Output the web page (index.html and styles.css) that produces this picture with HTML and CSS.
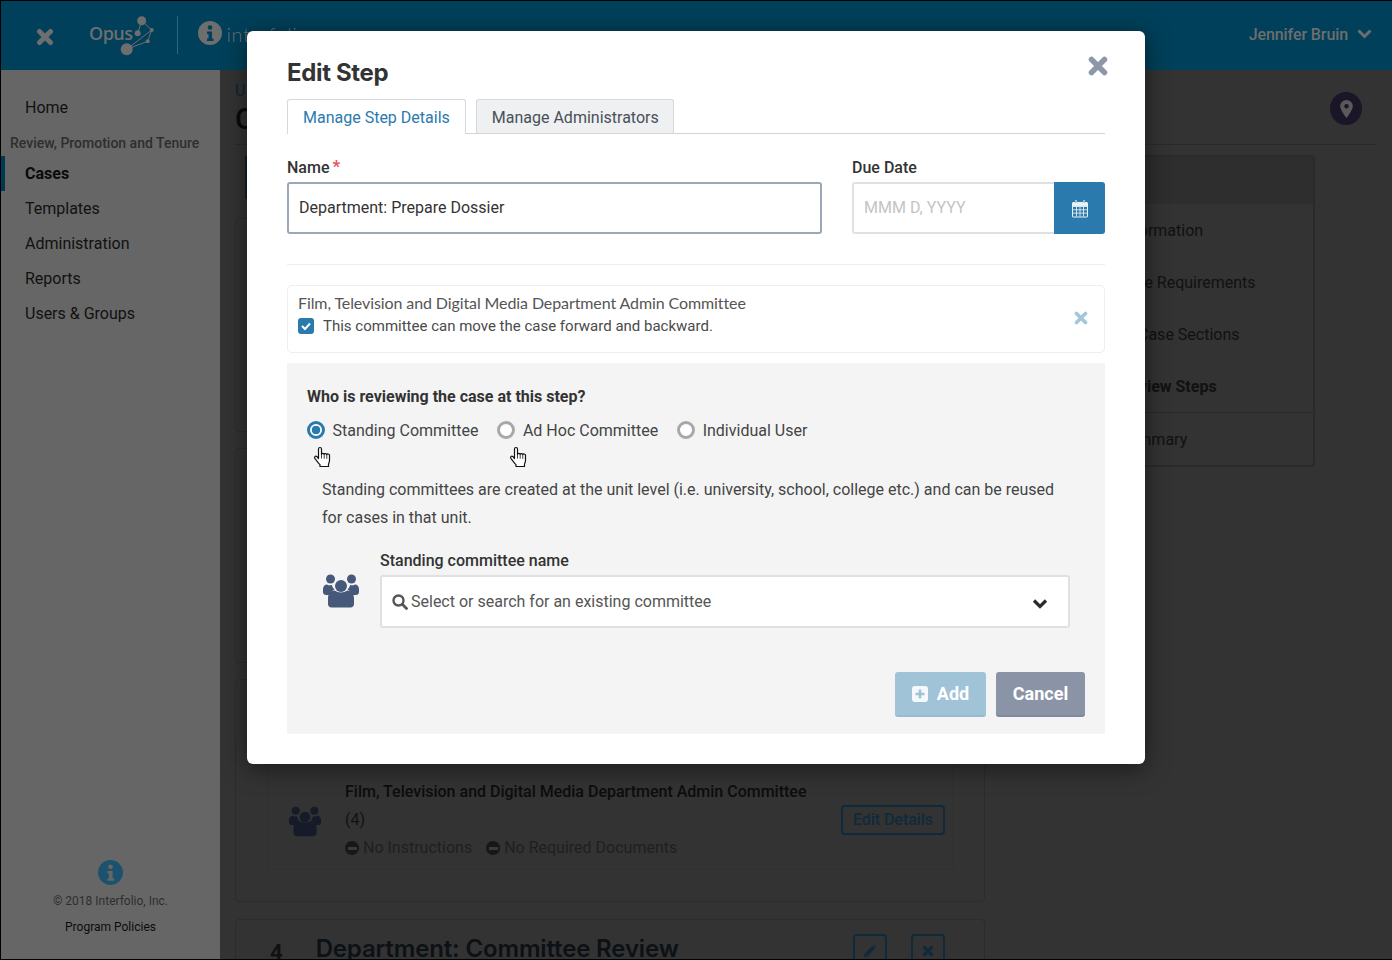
FILE: index.html
```html
<!DOCTYPE html>
<html lang="en">
<head>
<meta charset="utf-8">
<title>Edit Step</title>
<link rel="stylesheet" href="styles.css">
</head>
<body>
<div class="frame">
  <header class="topbar">
    <div class="brand">
      <svg class="x-icon" width="18" height="18" viewBox="0 0 18 18"><path d="M3.500 3.500l11 11M14.500 3.500l-11 11" stroke="#6e6e6e" stroke-width="5" stroke-linecap="round"/></svg>
      <span class="opus">Opus</span>
      <svg class="opus-mark" width="36" height="42" viewBox="0 0 36 42"><g fill="#6e6e6e"><circle cx="21.700" cy="5.700" r="4.500"/><circle cx="17.700" cy="18.300" r="3"/><circle cx="31.700" cy="15" r="2"/><circle cx="27.700" cy="26.300" r="2"/><circle cx="6.700" cy="34.300" r="6"/></g><path d="M21.700 5.700l10 9.300-4 11.300M21.700 5.700l-4 12.600M6.700 34.300l25-19.300M6.700 34.300l21-8" stroke="#6e6e6e" stroke-width="1" fill="none"/></svg>
      <span class="brand-rule"></span>
      <svg class="brand-info" width="24" height="24" viewBox="0 0 24 24"><circle cx="12" cy="12" r="12" fill="#6e6e6e"/><circle cx="12" cy="6.500" r="2.300" fill="#00405a"/><path d="M9 10.500h5v7h1.500v2.500h-6.500v-2.500h1.500v-4.500h-1.500z" fill="#00405a"/></svg>
      <span class="brand-name">interfolio</span>
    </div>
    <div class="user">Jennifer Bruin
      <svg width="15" height="10" viewBox="0 0 15 10"><path d="M1.500 1.500l6 6 6-6" stroke="#6e6e6e" stroke-width="3" fill="none"/></svg>
    </div>
  </header>
  <div class="body-row">
    <nav class="sidebar">
      <a class="nav-item">Home</a>
      <div class="nav-group">Review, Promotion and Tenure</div>
      <a class="nav-item is-current">Cases</a>
      <a class="nav-item">Templates</a>
      <a class="nav-item">Administration</a>
      <a class="nav-item">Reports</a>
      <a class="nav-item">Users &amp; Groups</a>
      <div class="side-foot">
        <svg width="25" height="25" viewBox="0 0 24 24"><circle cx="12" cy="12" r="12" fill="#1d526f"/><circle cx="12" cy="6.500" r="2.300" fill="#666"/><path d="M9 10.500h5v7h1.500v2.500h-6.500v-2.500h1.500v-4.500h-1.500z" fill="#666"/></svg>
        <p class="copyright">© 2018 Interfolio, Inc.</p>
        <p class="policies">Program Policies</p>
      </div>
    </nav>
    <main class="content">
      <div class="page-head">
        <div>
          <div class="crumb">U</div>
          <div class="page-title">C</div>
        </div>
        <span class="pin"><svg width="13" height="18" viewBox="0 0 14 20"><path fill-rule="evenodd" d="M7 0a7 7 0 0 1 7 7c0 3-4 9.500-7 13C4 16.500 0 10 0 7a7 7 0 0 1 7-7zm0 4.500a2.500 2.500 0 1 0 0 5 2.500 2.500 0 0 0 0-5z" fill="#5a5a5a"/></svg></span>
      </div>
      <div class="columns">
        <div class="steps">
          <div class="step-tab"></div>
          <section class="step-card card-a"></section>
          <section class="step-card card-b"></section>
          <section class="step-card card-c">
            <div class="inner-card">
              <svg class="users-dark" width="32" height="31" viewBox="0 0 36 34"><use href="#users" fill="#151b28"/></svg>
              <div class="inner-text">
                <div class="inner-title">Film, Television and Digital Media Department Admin Committee</div>
                <div class="inner-count">(4)</div>
                <div class="inner-meta">
                  <span class="meta-item"><i class="minus"></i>No Instructions</span>
                  <span class="meta-item"><i class="minus"></i>No Required Documents</span>
                </div>
              </div>
              <span class="ghost-btn">Edit Details</span>
            </div>
          </section>
          <section class="step-card card-d">
            <span class="step-num">4</span>
            <span class="step-name">Department: Committee Review</span>
            <span class="icon-btn"><svg width="14" height="14" viewBox="0 0 14 14"><path d="M1 13l.8-3.500L9.500 1.800l2.700 2.700-7.700 7.700zM10.300 1l.7-.6 2.600 2.600-.6.700z" fill="#0f2a3a"/></svg></span>
            <span class="icon-btn"><svg width="12" height="12" viewBox="0 0 12 12"><path d="M2.500 2.500l7 7M9.500 2.500l-7 7" stroke="#0f2a3a" stroke-width="3.200" stroke-linecap="round"/></svg></span>
          </section>
        </div>
        <aside class="panel">
          <div class="panel-head"></div>
          <div class="panel-item">Information</div>
          <div class="panel-item panel-req">Case Requirements</div>
          <div class="panel-item panel-inset">Case Sections</div>
          <div class="panel-item is-bold">Review Steps</div>
          <div class="panel-item panel-last">Summary</div>
        </aside>
      </div>
    </main>
  </div>

  <svg class="defs" width="0" height="0"><defs>
    <g id="users"><circle cx="7.500" cy="5" r="4.500"/><circle cx="28.500" cy="5" r="4.500"/><circle cx="18" cy="12" r="6"/><path d="M0 15c0-2.500 1.800-4.500 4-4.500 1.500 1 3.500 1 5 .5.300 2 1.200 3.400 2.500 4.500-2.500 1-4 3-4.500 5.500H3c-2 0-3-1.500-3-3zM36 15c0-2.500-1.800-4.500-4-4.500-1.500 1-3.500 1-5 .5-.300 2-1.200 3.400-2.500 4.500 2.500 1 4 3 4.500 5.500H33c2 0 3-1.500 3-3z"/><path d="M5 24c0-4 3-7.500 6.500-7.500 4 2.500 9 2.500 13 0 3.500 0 6.500 3.500 6.500 7.500v6c0 2-1.500 3.500-3.500 3.500h-19C6.500 33.500 5 32 5 30z"/></g>
    <g id="hand"><path d="M5.500 12.500V3c0-2 3-2 3 0v5.500c0-1.500 2.600-1.500 2.700 0 0-1.300 2.500-1.300 2.600.2.200-1.100 2.500-1 2.700.5v5.300c0 1.500-.5 2.500-1 3.500v2.500H7v-1.800c-1.500-1.500-3-3.700-5-6-1.300-1.500.5-3.200 2-2z" fill="#fff" stroke="#111" stroke-width="1.200" stroke-linejoin="round"/><path d="M8.500 8.500v4M11.200 8.700v4M13.800 8.900v4" stroke="#111" stroke-width=".8"/></g>
  </defs></svg>

  <div class="modal" role="dialog">
    <h1 class="modal-title">Edit Step</h1>
    <svg class="modal-close" width="20" height="20" viewBox="0 0 20 20"><path d="M3.500 3.500l13 13M16.500 3.500l-13 13" stroke="#8e97a8" stroke-width="5.500" stroke-linecap="round"/></svg>
    <div class="tabs">
      <span class="tab is-active">Manage Step Details</span>
      <span class="tab">Manage Administrators</span>
    </div>
    <div class="form-row">
      <div class="field-name">
        <label class="field-label">Name <span class="req">*</span></label>
        <div class="input input-strong">Department: Prepare Dossier</div>
      </div>
      <div class="field-date">
        <label class="field-label">Due Date</label>
        <div class="date-group">
          <div class="input input-date">MMM D, YYYY</div>
          <span class="date-btn"><svg width="18" height="19" viewBox="0 0 18 19"><path d="M1 4.500C1 3.700 1.700 3 2.500 3H4V1.500C4 .7 6 .7 6 1.500V3h6V1.500c0-.8 2-.8 2 0V3h1.500c.8 0 1.500.7 1.500 1.500v12.500c0 .8-.7 1.500-1.500 1.500h-13C1.700 18.500 1 17.800 1 17z" fill="#e9f1f6"/><path d="M5 1.500v2M13 1.500v2" stroke="#2a7aad" stroke-width="1"/><path d="M2 7.500h14v10H2z" fill="#2a7aad"/><path d="M2 7.500h14M2 10.800h14M2 14.100h14M5.500 7v10.500M9 7v10.500M12.500 7v10.500" stroke="#d4e4ee" stroke-width="1"/></svg></span>
        </div>
      </div>
    </div>
    <hr class="divider">
    <div class="committee">
      <div class="committee-body">
        <div class="committee-name">Film, Television and Digital Media Department Admin Committee</div>
        <div class="committee-opt">
          <svg width="16" height="16" viewBox="0 0 16 16"><rect width="16" height="16" rx="3" fill="#2a7aad"/><path d="M4 8l3 3 5-5.500" stroke="#fff" stroke-width="2" fill="none"/></svg>
          This committee can move the case forward and backward.
        </div>
      </div>
      <svg class="committee-x" width="14" height="14" viewBox="0 0 14 14"><path d="M2.500 2.500l9 9M11.500 2.500l-9 9" stroke="#a4c6da" stroke-width="3.600" stroke-linecap="round"/></svg>
    </div>
    <section class="review">
      <h2 class="review-q">Who is reviewing the case at this step?</h2>
      <div class="radios">
        <span class="radio is-on"><i class="dot"></i>Standing Committee
          <svg class="hand" width="18" height="23" viewBox="0 0 18 23"><use href="#hand"/></svg>
        </span>
        <span class="radio"><i class="dot"></i>Ad Hoc Committee
          <svg class="hand" width="18" height="23" viewBox="0 0 18 23"><use href="#hand"/></svg>
        </span>
        <span class="radio"><i class="dot"></i>Individual User</span>
      </div>
      <p class="review-help">Standing committees are created at the unit level (i.e. university, school, college etc.) and can be reused for cases in that unit.</p>
      <div class="picker">
        <svg class="users" width="36" height="34" viewBox="0 0 36 34"><use href="#users" fill="#46597a"/></svg>
        <div class="picker-main">
          <label class="field-label">Standing committee name</label>
          <div class="select">
            <svg width="16" height="16" viewBox="0 0 16 16"><circle cx="6.500" cy="6.500" r="5" stroke="#555" stroke-width="2.400" fill="none"/><path d="M10.300 10.300l4.200 4.200" stroke="#555" stroke-width="2.800" stroke-linecap="round"/></svg>
            <span class="select-text">Select or search for an existing committee</span>
            <svg class="chev" width="16" height="12" viewBox="0 0 16 12"><path d="M2 3.500l6 6 6-6" stroke="#2b2b2b" stroke-width="3.200" fill="none"/></svg>
          </div>
        </div>
      </div>
      <div class="actions">
        <span class="btn btn-add"><svg width="16" height="16" viewBox="0 0 16 16"><rect width="16" height="16" rx="3" fill="#fff" opacity=".9"/><path d="M8 3.500v9M3.500 8h9" stroke="#a0c3d8" stroke-width="2.600"/></svg>Add</span>
        <span class="btn btn-cancel">Cancel</span>
      </div>
    </section>
  </div>
</div>
</body>
</html>
```
FILE: styles.css
```css
* { box-sizing: border-box; }
html, body { margin: 0; padding: 0; }
body { font-family: Roboto, "Liberation Sans", sans-serif; color: #333; overflow: hidden; }
p, h1, h2 { margin: 0; }
.defs { position: absolute; }

.frame { position: relative; width: 1392px; height: 960px; border: 1px solid #000; border-right: 0; overflow: hidden; background: #333; display: flex; flex-direction: column; }

.topbar { flex: none; height: 69px; background: #00405a; display: flex; justify-content: space-between; align-items: center; padding: 0 20px 0 35px; color: #6e6e6e; }
.brand { display: flex; align-items: center; }
.x-icon { margin-top: 2px; }
.opus { margin-left: 35px; font: 600 18px "Open Sans", sans-serif; letter-spacing: -.5px; margin-top: -6px; }
.opus-mark { margin: 0 0 0 -13px; }
.brand-rule { width: 1px; height: 38px; margin: -1px 20px 0 21px; background: #33667d; }
.brand-info { margin-top: -5px; }
.brand-name { margin: -4px 0 0 5px; font: 300 20px Lato, sans-serif; letter-spacing: .5px; }
.user { font: 500 16px Roboto, sans-serif; margin-top: -3px; display: flex; align-items: center; gap: 9px; letter-spacing: -.1px; }

.body-row { flex: 1; display: flex; min-height: 0; }
.sidebar { flex: none; width: 219px; background: #666; padding-top: 20px; display: flex; flex-direction: column; color: #111; }
.nav-item { height: 35px; padding-left: 20px; display: flex; align-items: center; font-size: 16px; border-left: 4px solid transparent; }
.nav-group { font-size: 14px; font-weight: 500; color: #2e2e2e; padding: 10px 0 3px 9px; height: 31px; line-height: 17px; }
.is-current { border-left-color: #003a52; font-weight: 700; color: #0a0a0a; }
.side-foot { margin-top: auto; padding-bottom: 25px; text-align: center; display: flex; flex-direction: column; align-items: center; font-size: 12px; }
.copyright { margin-top: 9px; color: #2e2e2e; }
.policies { margin-top: 12px; color: #0c0c0c; }

.content { flex: 1; min-width: 0; padding: 10px 16px 0 15px; background: #333; }
.page-head { display: flex; justify-content: space-between; align-items: flex-start; height: 65px; border-bottom: 1px solid #2a2a2a; }
.crumb { font-size: 16px; line-height: 22px; color: #0f2430; }
.page-title { font: 500 30px/34px Roboto, sans-serif; color: #0a0a0a; }
.pin { width: 32px; height: 33px; border-radius: 50%; background: #1a1628; display: flex; align-items: center; justify-content: center; margin: 12px 14px 0 0; }
.columns { display: flex; gap: 30px; align-items: flex-start; }
.steps { width: 750px; flex: none; }
.step-tab { margin: 11px 0 0 10px; height: 43px; width: 10px; background: #10202c; }
.step-card { border: 1px solid #2c2c2c; border-radius: 4px; }
.card-a { margin-top: 19px; height: 214px; }
.card-b { margin-top: 16px; height: 215px; }
.card-c { margin-top: 16px; height: 223px; padding: 31px; }
.inner-card { display: flex; height: 159px; padding: 66px 7px 0 21px; gap: 24px; align-items: flex-start; border: 1px solid #303030; border-radius: 3px; }
.users-dark { margin-top: 28px; flex: none; }
.inner-text { flex: 1; }
.inner-title { font-size: 16px; font-weight: 500; color: #0d0d0d; line-height: 28px; }
.inner-count { font-size: 16px; line-height: 28px; color: #111; }
.inner-meta { display: flex; gap: 14px; font-size: 16px; line-height: 28px; color: #1f1f1f; }
.meta-item { display: flex; align-items: center; gap: 4px; }
.minus { display: inline-block; width: 14px; height: 14px; border-radius: 50%; background: linear-gradient(#3a3a3a, #3a3a3a) center / 9px 3px no-repeat #171717; }
.ghost-btn { flex: none; margin-top: 27px; height: 30px; padding: 0 10px; border: 2px solid #0f2a3a; border-radius: 4px; color: #0f2a3a; font-weight: 500; font-size: 16px; line-height: 26px; letter-spacing: -.05px; }
.card-d { margin-top: 17px; height: 80px; display: flex; align-items: flex-start; padding: 15px 39px 0 34px; }
.step-num { font-size: 22px; font-weight: 700; color: #111; margin-top: 5px; }
.step-name { font: 600 24px/28px Inter, sans-serif; color: #0c1116; margin-left: 33px; flex: 1; letter-spacing: -.15px; }
.icon-btn { width: 34px; height: 34px; margin-top: -1px; border: 2px solid #0f2a3a; border-radius: 4px; display: flex; align-items: center; justify-content: center; margin-left: 24px; }
.panel { margin-top: 10px; flex: none; width: 300px; height: 312px; border: 2px solid #2a2a2a; border-radius: 4px; }
.panel-head { height: 47px; background: #2e2e2e; }
.panel-item { height: 52px; display: flex; align-items: center; padding-left: 103px; font-size: 16px; color: #111; }
.panel-req { padding-left: 100px; }
.panel-inset { padding-left: 121px; }
.is-bold { font-weight: 700; }
.panel-last { height: 53px; border-top: 1px solid #282828; padding-left: 102px; }

.modal { position: absolute; left: 246px; top: 30px; width: 898px; height: 733px; background: #fff; border-radius: 6px; padding: 27px 40px 30px; box-shadow: 0 4px 24px rgba(0,0,0,.5); display: flex; flex-direction: column; }
.modal-title { font: 700 24px/30px Inter, sans-serif; color: #333; letter-spacing: -.35px; }
.modal-close { position: absolute; right: 37px; top: 25px; }
.tabs { display: flex; margin-top: 11px; gap: 10px; border-bottom: 1px solid #d4d4d4; height: 35px; }
.tab { height: 34px; padding: 0 15px; border: 1px solid #d5d9df; border-bottom: 0; border-radius: 3px 3px 0 0; background: #eef0f2; font-size: 16px; line-height: 35px; color: #4a4f58; }
.tab + .tab { padding-right: 14px; }
.tab.is-active { background: #fff; color: #2a7aad; height: 35px; }
.form-row { display: flex; gap: 30px; margin-top: 24px; }
.field-name { width: 535px; }
.field-date { width: 253px; }
.field-label { display: block; font-size: 16px; font-weight: 500; color: #333; line-height: 20px; margin-bottom: 4px; }
.req { color: #e8505b; font-size: 17px; font-weight: 700; line-height: 0; vertical-align: 1px; margin-left: -1px; }
.input { height: 52px; border: 2px solid #e0e0e0; border-radius: 3px; padding: 0 10px; font-size: 16px; line-height: 48px; background: #fff; }
.input-strong { border-color: #9aa8ba; color: #333; }
.date-group { display: flex; }
.input-date { flex: 1; border-right: 0; border-radius: 3px 0 0 3px; color: #c4c4c4; }
.date-btn { width: 51px; height: 52px; background: #2a7aad; border-radius: 0 3px 3px 0; display: flex; align-items: center; justify-content: center; }
.divider { border: 0; border-top: 1px solid #eee; margin: 30px 0 20px; width: 100%; }
.committee { flex: none; height: 68px; border: 1px solid #eee; border-radius: 5px; padding: 0 16px 0 10px; display: flex; justify-content: space-between; align-items: center; }
.committee-body { margin-bottom: 6px; }
.committee-name { font: 400 16px/20px Lato, sans-serif; color: #555; letter-spacing: -.1px; }
.committee-opt { font-size: 15px; line-height: 26px; color: #4a4a4a; display: flex; align-items: center; gap: 9px; }
.committee-x { margin-bottom: 2px; }
.review { margin-top: 10px; flex: 1; background: #f4f4f4; padding: 24px 20px 17px; display: flex; flex-direction: column; }
.review-q { font-size: 16px; font-weight: 700; line-height: 20px; color: #333; }
.radios { display: flex; gap: 19px; margin-top: 10px; height: 26px; align-items: center; }
.radio { position: relative; display: flex; align-items: center; gap: 7.500px; font-size: 16px; color: #444; }
.dot { width: 18px; height: 18px; border-radius: 50%; background: #fff; border: 3px solid #a8a8a8; display: inline-block; flex: none; }
.is-on .dot { border: 3px solid #2a7aad; background: radial-gradient(circle, #2a7aad 0 4px, #fff 4.600px); }
.hand { position: absolute; left: 6px; top: 25px; }
.radio:nth-child(2) .hand { left: 11.500px; }
.review-help { margin: 33px 15px 0; font-size: 16px; line-height: 28px; color: #444; }
.picker { display: flex; margin-top: 19px; align-items: flex-start; gap: 21px; padding: 0 15px 0 16px; }
.users { margin-top: 23px; flex: none; }
.picker-main { flex: 1; }
.select { height: 53px; border: 2px solid #e0e0e0; border-radius: 3px; background: #fff; display: flex; align-items: center; padding: 0 20px 0 10px; font-size: 16px; color: #555; gap: 3px; }
.select-text { flex: 1; }
.chev { margin-top: 3px; }
.actions { margin-top: auto; display: flex; justify-content: flex-end; gap: 10px; }
.btn { height: 45px; border-radius: 3px; color: #fff; font-weight: 700; font-size: 18px; display: flex; align-items: center; justify-content: center; }
.btn-add { width: 91px; gap: 9px; background: #a0c3d8; border-bottom: 2px solid #98bad0; }
.btn-cancel { width: 89px; background: #8b93a6; border-bottom: 2px solid #80889b; }
```
